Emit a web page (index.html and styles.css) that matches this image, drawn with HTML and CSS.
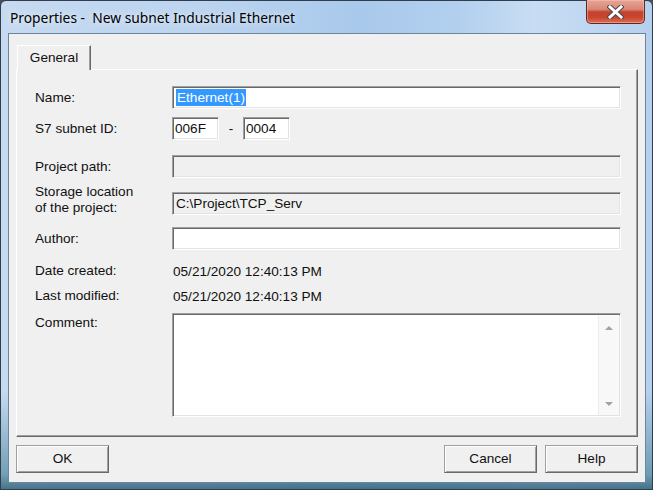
FILE: index.html
```html
<!DOCTYPE html>
<html>
<head>
<meta charset="utf-8">
<link rel="stylesheet" href="styles.css">
</head>
<body>
<div class="window">
  <div class="titlebar">
    <span class="title">Properties - &nbsp;New subnet Industrial Ethernet</span>
    <div class="close">
      <svg width="17" height="14" viewBox="0 0 17 14">
        <path d="M3 2 L14 12 M14 2 L3 12" stroke="#4a4a4a" stroke-width="5" stroke-linecap="square" fill="none"/>
        <path d="M3 2 L14 12 M14 2 L3 12" stroke="#ffffff" stroke-width="3" stroke-linecap="square" fill="none"/>
      </svg>
    </div>
  </div>
  <div class="client">
    <div class="tabs"><div class="tab">General</div></div>
    <div class="panel">
      <div class="row r-name">
        <span class="label">Name:</span>
        <div class="field"><span class="sel">Ethernet(1)</span></div>
      </div>
      <div class="row r-id">
        <span class="label">S7 subnet ID:</span>
        <div class="idgroup">
          <div class="field small">006F</div>
          <span class="dash">-</span>
          <div class="field small">0004</div>
        </div>
      </div>
      <div class="row r-path">
        <span class="label">Project path:</span>
        <div class="field disabled"></div>
      </div>
      <div class="row r-store">
        <span class="label">Storage location<br>of the project:</span>
        <div class="field disabled">C:\Project\TCP_Serv</div>
      </div>
      <div class="row r-author">
        <span class="label">Author:</span>
        <div class="field"></div>
      </div>
      <div class="row r-text r-created">
        <span class="label">Date created:</span>
        <span class="value">05/21/2020 12:40:13 PM</span>
      </div>
      <div class="row r-text r-mod">
        <span class="label">Last modified:</span>
        <span class="value">05/21/2020 12:40:13 PM</span>
      </div>
      <div class="row r-comment">
        <span class="label">Comment:</span>
        <div class="memo">
          <div class="memo-body"></div>
          <div class="scroll">
            <span class="arrow up"></span>
            <span class="arrow down"></span>
          </div>
        </div>
      </div>
    </div>
    <div class="buttons">
      <div class="btn">OK</div>
      <div class="spacer"></div>
      <div class="btn">Cancel</div>
      <div class="btn">Help</div>
    </div>
  </div>
</div>
</body>
</html>
```
FILE: styles.css
```css
* { box-sizing: border-box; }
html, body { margin: 0; padding: 0; }
body {
  background: #4a4f55;
  width: 653px;
  height: 490px;
  overflow: hidden;
  font-family: "Liberation Sans", Arial, sans-serif;
  font-size: 13.6px;
  color: #111;
}
.window {
  width: 653px;
  height: 490px;
  border: 1px solid #2f3d4d;
  border-radius: 6px 6px 0 0;
  background:
    linear-gradient(to bottom, rgba(255,255,255,0) 0%, rgba(255,255,255,0) 80%, rgba(60,120,140,0.6) 97%, rgba(40,90,110,0.8) 100%),
    linear-gradient(to right, #c6daf1 0%, #bcd4ef 30%, #a9c9ec 55%, #b2cfee 70%, #c8ddf3 82%, #b5d0ee 100%);
  display: flex;
  flex-direction: column;
}
.titlebar {
  height: 32px;
  display: flex;
  align-items: center;
  justify-content: space-between;
}
.title {
  padding-left: 9px;
  padding-top: 1px;
  font-family: "Noto Sans", "Open Sans", sans-serif;
  font-size: 13.8px;
  color: #000;
  text-shadow: 0 0 6px rgba(255,255,255,0.9);
  white-space: nowrap;
}
.close {
  align-self: flex-start;
  margin-top: -1px;
  margin-right: 7px;
  width: 59px;
  height: 24px;
  border: 1px solid #5e2a22;
  border-top: none;
  border-radius: 0 0 5px 5px;
  background: linear-gradient(to bottom, #e6a596 0%, #d98876 40%, #c3432f 52%, #c8452f 75%, #dd6e55 100%);
  box-shadow: inset 0 0 0 1px rgba(255,200,190,0.45);
  display: flex;
  align-items: center;
  justify-content: center;
}
.client {
  flex: 1;
  margin: 0 6px 6px 7px;
  border: 1px solid #6d83a0;
  background: #f0f0f0;
  padding: 11px 7px 9px 7px;
  display: flex;
  flex-direction: column;
}
.tabs {
  display: flex;
  height: 24px;
  position: relative;
  z-index: 1;
}
.tab {
  width: 74px;
  height: 25px;
  margin-left: 1px;
  background: #f0f0f0;
  border-top: 1px solid #ffffff;
  border-left: 1px solid #ffffff;
  border-right: 1px solid #696969;
  box-shadow: inset -1px 0 #a0a0a0;
  display: flex;
  align-items: center;
  justify-content: center;
  padding-bottom: 1px;
}
.panel {
  height: 368px;
  border: 1px solid;
  border-color: #ffffff #696969 #696969 #ffffff;
  box-shadow: inset -1px -1px #a0a0a0;
  padding: 16px 16px 0 18px;
  display: flex;
  flex-direction: column;
}
.row {
  display: grid;
  grid-template-columns: 137px 1fr;
  grid-template-rows: 23px;
  align-items: center;
  height: 23px;
}
.r-id { margin-top: 8px; }
.r-path { margin-top: 15px; }
.r-store { margin-top: 14px; }
.r-store .label { margin-top: -8px; }
.r-author { margin-top: 12px; }
.r-created { margin-top: 12px; height: 18px; grid-template-rows: 18px; }
.r-mod { margin-top: 7px; height: 18px; grid-template-rows: 18px; }
.r-comment { margin-top: 8px; height: 104px; grid-template-rows: 104px; align-items: start; }
.r-comment .label { padding-top: 2px; }
.label { line-height: 16px; white-space: nowrap; }
.value { padding-left: 1px; }
.field {
  height: 23px;
  background: #ffffff;
  border: 1px solid;
  border-color: #a0a0a0 #ffffff #ffffff #a0a0a0;
  box-shadow: inset 1px 1px #696969, inset -1px -1px #e3e3e3;
  padding: 2px 2px 0 3px;
  line-height: 17px;
  white-space: nowrap;
}
.field.disabled { background: #f0f0f0; }
.field.small { width: 47px; padding-left: 2px; }
.sel {
  display: inline-block;
  background: #3399ff;
  color: #ffffff;
  padding: 0 1px;
}
.idgroup {
  display: flex;
  align-items: center;
}
.dash { width: 24px; text-align: center; }
.memo {
  height: 104px;
  border: 1px solid;
  border-color: #a0a0a0 #ffffff #ffffff #a0a0a0;
  box-shadow: inset 1px 1px #696969, inset -1px -1px #e3e3e3;
  background: #ffffff;
  display: flex;
  padding: 2px 1px 1px 2px;
}
.memo-body { flex: 1; }
.scroll {
  width: 21px;
  background: #f8f8f8;
  border-left: 1px solid #ececec;
  display: flex;
  flex-direction: column;
  justify-content: space-between;
  align-items: center;
  padding: 10px 0 9px;
}
.arrow {
  width: 0;
  height: 0;
  border-left: 4px solid transparent;
  border-right: 4px solid transparent;
}
.arrow.up { border-bottom: 4px solid #a2a2a2; }
.arrow.down { border-top: 4px solid #a2a2a2; }
.buttons {
  margin-top: 8px;
  display: flex;
  gap: 8px;
}
.spacer { flex: 1; }
.btn {
  width: 93px;
  height: 28px;
  border: 1px solid;
  border-color: #a0a0a0 #696969 #696969 #a0a0a0;
  box-shadow: inset 1px 1px #ffffff, inset -1px -1px #a0a0a0;
  background: #f0f0f0;
  display: flex;
  align-items: center;
  justify-content: center;
  padding-bottom: 1px;
}
```
